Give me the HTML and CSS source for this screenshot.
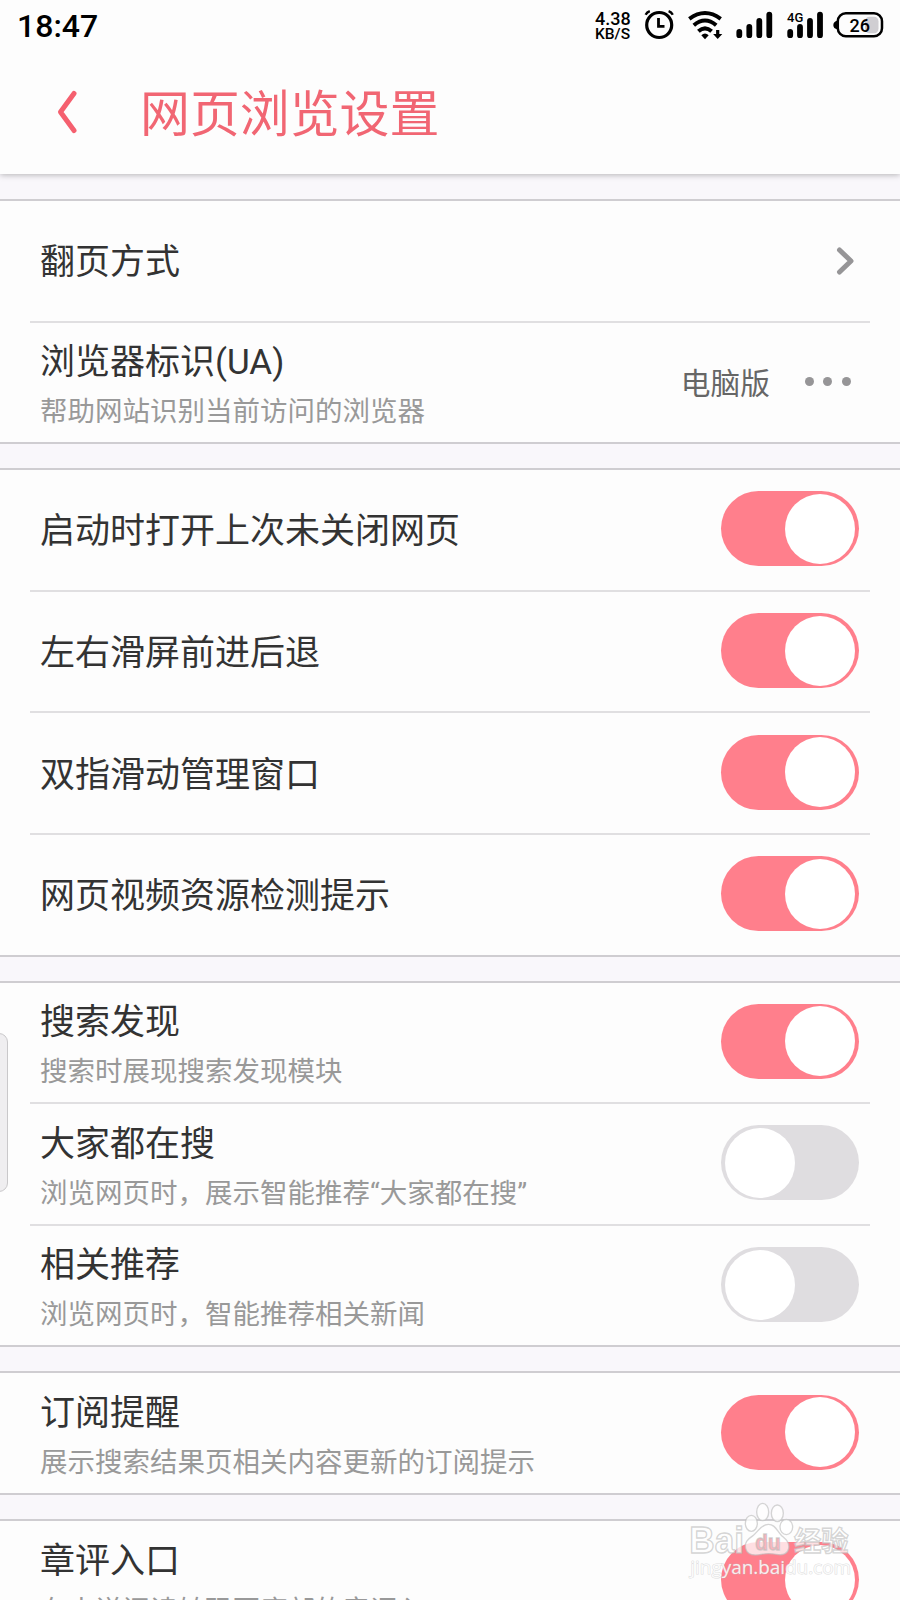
FILE: index.html
```
<!DOCTYPE html>
<html lang="zh-CN">

<head>
  <meta charset="UTF-8">
  <title>网页浏览设置</title>
  <link rel="stylesheet" href="styles.css">
</head>

<body>
  <div class="header">
    <div class="status">
      <div class="time">18:47</div>
      <div class="speed">
        <div class="speed-num">4.38</div>
        <div class="speed-unit">KB/S</div>
      </div>
      <svg class="status-icons" width="242" height="50" viewBox="0 0 242 50">
        <!-- 闹钟 -->
        <g fill="none" stroke="#000" stroke-width="3.2">
          <circle cx="16.2" cy="25" r="12.5" />
          <path d="M15.5 18v8.3h6" stroke-width="2.8" />
          <path d="M2.6 14.8q1.4-2.6 4.2-3.6M29.8 14.8q-1.4-2.6-4.2-3.6" stroke-width="2.4" />
        </g>
        <!-- wifi -->
        <g fill="none" stroke="#000" stroke-width="4">
          <path d="M46.3 18.8Q62 7.2 77.7 18.8" />
          <path d="M50.8 25.2Q62 15.8 73.2 25.2" />
          <path d="M55.4 31.3Q62 25.4 68.6 31.3" />
        </g>
        <path d="M58.3 35.2q3.7-3.2 7.4 0L62 39.2z" />
        <path d="M73.1 30h3.2v4h3l-4.6 5-4.6-5h3z" />
        <!-- 信号 -->
        <g stroke="#000" stroke-width="5.8" stroke-linecap="round">
          <path d="M96.3 32v3.2M106.3 27v8.2M116.3 21v14.2M126.3 14.6v20.6" />
          <path d="M147.2 32v3.2M157 27v8.2M167 21v14.2M177 14.6v20.6" />
        </g>
        <text class="net" x="144" y="22">4G</text>
        <!-- 电池 -->
        <path d="M194.5 20.5q-4.2 1-4.2 4.5t4.2 4.5z" />
        <rect x="222" y="16.8" width="13.5" height="16.4" rx="4.5" fill="#d0ced2" />
        <rect x="194.8" y="13.3" width="44.2" height="23" rx="8" fill="none" stroke="#000" stroke-width="2.5" />
        <text class="power" x="206.5" y="31.8">26</text>
      </svg>
    </div>
    <div class="title">
      <svg class="back" width="24" height="46" viewBox="0 0 24 46">
        <path d="M18 4.5L4.5 23 18 41.5" />
      </svg>
      <h1>网页浏览设置</h1>
    </div>
  </div>

  <div class="list">
    <div class="group">
      <div class="item">
        <div class="name">翻页方式</div>
        <svg class="arrow" width="20" height="30" viewBox="0 0 20 30">
          <path d="M4.5 4l11.5 11-11.5 11" />
        </svg>
      </div>
      <div class="item">
        <div class="text">
          <div class="name">浏览器标识(UA)</div>
          <div class="desc">帮助网站识别当前访问的浏览器</div>
        </div>
        <div class="value">电脑版</div>
        <div class="more"><i></i><i></i><i></i></div>
      </div>
    </div>

    <div class="group">
      <div class="item">
        <div class="name">启动时打开上次未关闭网页</div>
        <div class="switch on"></div>
      </div>
      <div class="item">
        <div class="name">左右滑屏前进后退</div>
        <div class="switch on"></div>
      </div>
      <div class="item">
        <div class="name">双指滑动管理窗口</div>
        <div class="switch on"></div>
      </div>
      <div class="item">
        <div class="name">网页视频资源检测提示</div>
        <div class="switch on"></div>
      </div>
    </div>

    <div class="group">
      <div class="item">
        <div class="text">
          <div class="name">搜索发现</div>
          <div class="desc">搜索时展现搜索发现模块</div>
        </div>
        <div class="switch on"></div>
      </div>
      <div class="item">
        <div class="text">
          <div class="name">大家都在搜</div>
          <div class="desc">浏览网页时，展示智能推荐“大家都在搜”</div>
        </div>
        <div class="switch"></div>
      </div>
      <div class="item">
        <div class="text">
          <div class="name">相关推荐</div>
          <div class="desc">浏览网页时，智能推荐相关新闻</div>
        </div>
        <div class="switch"></div>
      </div>
    </div>

    <div class="group">
      <div class="item">
        <div class="text">
          <div class="name">订阅提醒</div>
          <div class="desc">展示搜索结果页相关内容更新的订阅提示</div>
        </div>
        <div class="switch on"></div>
      </div>
    </div>

    <div class="group">
      <div class="item">
        <div class="text">
          <div class="name">章评入口</div>
          <div class="desc">在小说阅读转码页底部的章评入口</div>
        </div>
        <div class="switch on"></div>
      </div>
    </div>
  </div>

  <!-- 侧边把手 -->
  <div class="handle"></div>

  <!-- 水印 -->
  <svg class="watermark" width="240" height="110" viewBox="0 0 720 330">
    <g class="mark">
      <text x="88" y="190" font-size="108" textLength="164" lengthAdjust="spacingAndGlyphs">Bai</text>
      <ellipse cx="274" cy="100" rx="18" ry="24" />
      <ellipse cx="308" cy="66" rx="18" ry="26" />
      <ellipse cx="352" cy="70" rx="18" ry="25" />
      <ellipse cx="379" cy="111" rx="19" ry="23" />
      <path d="M325 103c-22 0-30 22-46 34-16 11-26 20-22 38 5 21 26 22 46 18 15-3 31-3 46 0 20 4 34-1 37-18 3-19-9-27-21-38-14-13-19-34-40-34z" />
      <text class="du" x="286" y="180" font-size="66" textLength="76" lengthAdjust="spacingAndGlyphs">du</text>
      <text x="402" y="182" font-size="82" textLength="164" lengthAdjust="spacingAndGlyphs">经验</text>
    </g>
    <text class="site" x="91" y="252" font-size="52" textLength="482" lengthAdjust="spacingAndGlyphs">jingyan.baidu.com</text>
  </svg>
</body>

</html>
```
FILE: styles.css
```
* {
  padding: 0;
  margin: 0;
  box-sizing: border-box;
}

body {
  position: relative;
  height: 1600px;
  overflow: hidden;
  background: #f9f7fb;
  font-family: Roboto, "Noto Sans CJK SC", sans-serif;
  color: #333;
}

.header {
  position: relative;
  height: 174px;
  background: #fdfdfd;
  box-shadow: 0 1px 6px rgba(0, 0, 0, .28);
}

/* 状态栏 */
.status {
  display: flex;
  height: 50px;
  padding: 0 15px 0 17px;
  color: #000;
}

.time {
  flex: 1;
  line-height: 52px;
  font-size: 32px;
  font-weight: 500;
}

.speed {
  width: 36px;
  margin-right: 12px;
  padding-top: 10px;
  font-weight: 500;
}

.speed-num {
  line-height: 17px;
  font-size: 18px;
}

.speed-unit {
  line-height: 14px;
  font-size: 15.5px;
}

.net {
  font-size: 13px;
  font-weight: 500;
}

.power {
  font-size: 18px;
  font-weight: 500;
}

/* 标题 */
.title {
  display: flex;
  align-items: center;
  height: 124px;
  padding-left: 56px;
}

.title h1 {
  margin-left: 60px;
  padding-top: 5px;
  line-height: 70px;
  font-size: 49.9px;
  font-weight: 400;
  color: #f16673;
}

.back path {
  fill: none;
  stroke: #f5606f;
  stroke-width: 5;
  stroke-linecap: round;
  stroke-linejoin: round;
}

/* 设置列表 */
.list {
  padding-top: 25px;
}

.group {
  margin-bottom: 24px;
  background: #fdfdfd;
  border-top: 2px solid #cfcdd1;
  border-bottom: 2px solid #cfcdd1;
}

.item {
  display: flex;
  align-items: center;
  height: 119.6px;
  margin: 0 30px;
  padding: 0 11.5px 0 10px;
}

.item + .item {
  height: 121.6px;
  border-top: 2px solid #e0dfe1;
}

.name {
  line-height: 52px;
  font-size: 35px;
}

.item > .name {
  padding-top: 5px;
}

.text {
  padding-top: 7.6px;
}

.desc {
  line-height: 46px;
  font-size: 27.5px;
  color: #999;
}

.arrow {
  margin-left: auto;
  margin-right: 3.5px;
}

.arrow path {
  fill: none;
  stroke: #969597;
  stroke-width: 5;
  stroke-linecap: round;
  stroke-linejoin: round;
}

.value {
  margin-left: auto;
  margin-bottom: 2px;
  font-size: 29.7px;
  color: #666;
}

.more {
  display: flex;
  gap: 9.3px;
  margin: 0 8px 2px 35px;
}

.more i {
  width: 9px;
  height: 9px;
  border-radius: 50%;
  background: #969597;
}

.switch {
  display: flex;
  width: 137.5px;
  height: 75px;
  margin-left: auto;
  margin-bottom: 2px;
  padding: 2.5px 3.5px;
  border-radius: 38px;
  background: #dfdde0;
}

.switch::before {
  content: "";
  width: 70px;
  height: 70px;
  border-radius: 50%;
  background: #fff;
}

.switch.on {
  justify-content: flex-end;
  background: #ff7f8c;
}

.handle {
  position: absolute;
  left: -2px;
  top: 1033px;
  width: 10px;
  height: 159px;
  border: 1px solid #c9c8ca;
  border-radius: 0 9px 9px 0;
  background: #efeef0;
}

.watermark {
  position: absolute;
  left: 660px;
  top: 1490px;
}

.mark {
  fill: rgba(255, 255, 255, .75);
  stroke: rgba(190, 190, 190, .65);
  stroke-width: 4;
  font-family: "Liberation Sans", "Noto Sans CJK SC", sans-serif;
  font-weight: 700;
}

.du {
  fill: #fbb4bb;
}

.site {
  fill: rgba(255, 255, 255, .85);
  stroke: rgba(190, 190, 190, .5);
  stroke-width: 3;
  paint-order: stroke;
  font-family: "Open Sans", sans-serif;
}
```
